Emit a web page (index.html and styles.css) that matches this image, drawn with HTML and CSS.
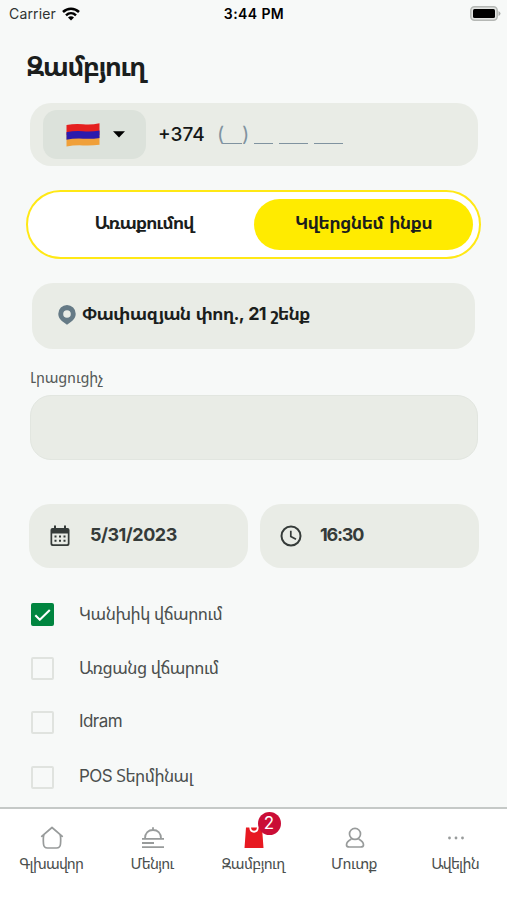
FILE: index.html
```html
<!DOCTYPE html>
<html lang="hy">
<head>
<meta charset="utf-8">
<meta name="viewport" content="width=device-width, initial-scale=1">
<title>Զամբյուղ</title>
<link rel="stylesheet" href="styles.css">
</head>
<body>
<div class="app">
  <header class="status">
    <div class="carrier"><span>Carrier</span>
      <svg width="18" height="14" viewBox="0 0 18 14" fill="none" stroke="#000" stroke-width="2.5"><path d="M1 5C5.500 .6 12.500 .6 17 5M4 8.300c2.900-2.700 7.100-2.700 10 0"/><path d="M6 10.400c1.700-1.500 4.300-1.500 6 0l-3 3z" fill="#000" stroke="none"/></svg>
    </div>
    <div class="clock">3:44 PM</div>
    <svg class="battery" width="31" height="15" viewBox="0 0 31 15"><rect x=".8" y=".8" width="26.400" height="13.400" rx="3.700" fill="#e3e5e3" stroke="#b5b8b5" stroke-width="1.500"/><rect x="3" y="3" width="22" height="9" rx="1.500"/><path d="M28.500 5q2 1 2 2.500t-2 2.500z" fill="#aaadaa"/></svg>
  </header>

  <main class="content">
    <h1 class="title">Զամբյուղ</h1>

    <div class="field phone">
      <button class="country" aria-label="Հայաստան">
        <svg width="34" height="24" viewBox="0 0 34 24">
          <defs><clipPath id="wave"><path d="M.5 2Q9 .3 17 1.200T33.500 .300V21.800q-8 1-16.500.6T.5 23.500z"/></clipPath></defs>
          <g clip-path="url(#wave)"><path fill="#e5201f" d="M0 0h34v12H0z"/><path fill="#f0a03a" d="M0 12h34v12H0z"/><path fill="#2b1aad" d="M0 9.200Q9 7.500 17 8.200t17-.7v7.400q-8 1.200-17 .8T0 16.700z"/></g>
        </svg>
        <svg width="12" height="7" viewBox="0 0 12 7"><path d="M0 .3h12L6 6.500z"/></svg>
      </button>
      <span class="code">+374</span>
      <span class="mask"><i class="paren">(</i><i class="blank two"></i><i class="paren">)</i><i class="blank gap two"></i><i class="blank gap three"></i><i class="blank gap three"></i></span>
    </div>

    <div class="switch">
      <button class="option"><span class="t-delivery">Առաքումով</span></button>
      <button class="option selected"><span class="t-pickup">Կվերցնեմ ինքս</span></button>
    </div>

    <div class="field address">
      <svg width="18" height="20" viewBox="0 0 18 20"><path fill="#657a86" fill-rule="evenodd" d="M9 0a8.700 8.700 0 0 0-8.700 8.700c0 4 2.500 6.500 5.300 8.500L9 19.800l3.400-2.600c2.800-2 5.300-4.500 5.300-8.500A8.700 8.700 0 0 0 9 0zm0 5.200a3.800 3.800 0 1 1 0 7.600 3.800 3.800 0 0 1 0-7.600z"/></svg>
      <span class="t-address">Փափազյան փող., 21 շենք</span>
    </div>

    <label class="label" for="note"><span class="t-label">Լրացուցիչ</span></label>
    <textarea class="field note" id="note"></textarea>

    <div class="schedule">
      <div class="field slot">
        <svg width="20" height="22" viewBox="0 0 20 22"><path fill="#353b39" fill-rule="evenodd" d="M4 .5h2V3h8V.5h2V3h1.500Q19.500 3 19.500 5v14q0 2-2 2h-15q-2 0-2-2V5q0-2 2-2H4zM2.200 8.500v9.800q0 1 1 1h13.600q1 0 1-1V8.500z"/><path fill="#353b39" d="M4.500 10.500h2v2h-2zm4.500 0h2v2H9zm4.500 0h2v2h-2zm-9 4.300h2v2h-2zm4.500 0h2v2H9zm4.500 0h2v2h-2z"/></svg>
        <span class="t-date">5/31/2023</span>
      </div>
      <div class="field slot">
        <svg width="22" height="22" viewBox="0 0 22 22" fill="none" stroke="#353b39" stroke-width="2"><circle cx="11" cy="11" r="9.500"/><path d="M10.800 5.800v5.700l5.200 2.800" stroke-width="1.700"/></svg>
        <span class="t-time">16:30</span>
      </div>
    </div>

    <ul class="payments">
      <li><span class="box checked"><svg width="17" height="12" viewBox="0 0 16 12" fill="none" stroke="#fff" stroke-width="2.100"><path d="M.8 6.200l4.500 4.500L15.300 1"/></svg></span><span class="t-cash">Կանխիկ վճարում</span></li>
      <li><span class="box"></span><span class="t-online">Առցանց վճարում</span></li>
      <li><span class="box"></span><span class="t-idram">Idram</span></li>
      <li><span class="box"></span><span class="t-pos">POS Տերմինալ</span></li>
    </ul>
  </main>

  <nav class="tabs">
    <a class="tab"><svg width="24" height="24" viewBox="0 0 24 24" fill="none" stroke="#989b9b" stroke-width="1.700" stroke-linejoin="round" stroke-linecap="round"><path d="M1.700 10.300L12 1.500l10.300 8.800M4 8.700c-1 2-.8 5.300-.5 9.300.3 3.300 1.500 4 4 4h9c2.500 0 3.700-.7 4-4 .3-4 .5-7.300-.5-9.300"/></svg><span class="t-home">Գլխավոր</span></a>
    <a class="tab"><svg width="24" height="24" viewBox="0 0 24 24" fill="none" stroke="#989b9b" stroke-width="1.800"><path d="M4 12.500C4 7 7.500 4 12 4s8 3 8 8.500M12 1.200V4M1 12.800h22M1 17h12M1 21.200h22"/></svg><span class="t-menu">Մենյու</span></a>
    <a class="tab"><span class="bag"><svg width="24" height="24" viewBox="0 0 24 24"><path fill="#e71921" d="M4 1.500h3.300q.4 5.200 4.700 5.200t4.700-5.200H20L21.500 22h-19z"/><path d="M9 1.500h6q-.4 3.200-3 3.200T9 1.500z" fill="#e71921"/></svg><b class="badge">2</b></span><span class="t-basket">Զամբյուղ</span></a>
    <a class="tab"><svg width="24" height="24" viewBox="0 0 24 24" fill="none" stroke="#989b9b" stroke-width="1.700"><circle cx="12" cy="7.900" r="5.500"/><path d="M8.500 13C5.500 14.500 3.500 17 3.500 19q0 2 3 2h11q3 0 3-2c0-2-2-4.500-5-6"/></svg><span class="t-login">Մուտք</span></a>
    <a class="tab"><svg width="24" height="24" viewBox="0 0 24 24" fill="#989b9b"><circle cx="5.500" cy="12" r="1.400"/><circle cx="12" cy="12" r="1.400"/><circle cx="18.500" cy="12" r="1.400"/></svg><span class="t-more">Ավելին</span></a>
  </nav>
</div>
</body>
</html>
```
FILE: styles.css
```css
* { box-sizing: border-box; }
body { margin: 0; background: #f7f9f8; color: #1b1e1d; font-family: "Inter", "Noto Sans Armenian", "DejaVu Sans", sans-serif; }
button { border: 0; padding: 0; font: inherit; color: inherit; background: none; }
svg { display: block; flex: none; }
span { white-space: nowrap; }
.app { width: 507px; height: 900px; display: flex; flex-direction: column; overflow: hidden; }

.status { height: 27px; flex: none; display: grid; grid-template-columns: 1fr auto 1fr; align-items: center; padding: 0 6px 0 9px; color: #000; font-size: 14px; }
.carrier { display: flex; align-items: center; gap: 6px; color: #303332; letter-spacing: .15px; }
.clock { font-weight: 600; letter-spacing: .4px; margin-right: 2px; }
.battery { justify-self: end; }

.content { flex: 1; min-height: 0; padding: 0 26px; }
.title { margin: 22px 0 0; height: 54px; font-size: 27px; line-height: 36px; font-weight: 700; letter-spacing: -1.900px; white-space: nowrap; }
.field { display: flex; align-items: center; background: #e9ece6; border-radius: 21px; }

.phone { height: 63px; margin: 0 3px 0 4px; padding-left: 13px; }
.country { width: 103px; height: 49px; border-radius: 14px; background: #dce2db; display: flex; align-items: center; justify-content: center; gap: 13px; padding-left: 2px; }
.code { margin-left: 12px; width: 59px; font-size: 19px; font-weight: 500; color: #151817; }
.mask { display: flex; height: 23px; align-items: flex-end; color: #8093a0; font-size: 20px; }
.paren { font-style: normal; width: 6px; line-height: 23px; font-weight: 400; }
.blank { border-bottom: 1.500px solid #8093a0; margin-bottom: 2px; }
.two { width: 19px; }
.three { width: 29px; }
.gap { margin-left: 6px; }

.switch { height: 69px; margin: 24px 0 0 0; display: grid; grid-template-columns: 1fr 219px; padding: 7px 6px 7px; border: 2px solid #ffe815; border-radius: 35px; background: #fff; }
.option { border-radius: 26px; font-size: 18px; font-weight: 700; padding-bottom: 5px; }
.selected { background: #ffeb00; }

.address { height: 66px; margin: 24px 6px 0; padding: 0 0 4px 26px; gap: 6px; font-size: 18px; font-weight: 700; }
.address svg { position: relative; top: 1px; }
.label { display: block; margin: 19px 4px 0; height: 27px; line-height: 20px; font-size: 15px; color: #555958; }
.note { display: block; width: 448px; height: 65px; margin-left: 4px; border: 1px solid #e2e6e0; resize: none; outline: 0; }

.schedule { display: grid; grid-template-columns: 1fr 1fr; gap: 12px; margin: 44px 2px 0 3px; }
.slot { height: 64px; padding-left: 21px; gap: 20px; font-size: 18px; font-weight: 700; color: #353b39; }
.slot + .slot { gap: 18px; padding-left: 20px; }
.slot span { padding-bottom: 4px; }

.payments { list-style: none; margin: 35px 0 0; padding: 0 0 0 5px; display: grid; gap: 31.200px; }
.payments li { height: 23px; display: flex; align-items: center; gap: 25px; font-size: 17px; color: #4b4f4e; }
.payments li > span:last-child { padding-bottom: 3px; }
.box { width: 23px; height: 23px; border: 2px solid #e0e3df; border-radius: 2px; flex: none; display: grid; place-items: center; }
.checked { background: #00853f; border-color: #00853f; }

.tabs { flex: none; height: 93px; display: grid; grid-template-columns: repeat(5, 101px); justify-content: center; background: #fff; border-top: 2px solid #c5c9c7; padding-top: 17px; }
.tab { display: flex; flex-direction: column; align-items: center; gap: 4px; font-size: 15px; line-height: 20px; color: #4b4f4e; }
.bag { position: relative; }
.badge { position: absolute; left: 16px; top: -14px; width: 23px; height: 23px; border-radius: 50%; background: #ca0d36; color: #fff; text-align: center; font-size: 17px; line-height: 23px; font-weight: 400; }

.t-delivery { letter-spacing: -1.200px; }
.t-pickup { letter-spacing: -.7px; word-spacing: 2px; }
.t-address { letter-spacing: -.850px; word-spacing: 1.500px; padding-bottom: 3px; }
.t-label { letter-spacing: -.2px; }
.t-date { letter-spacing: -.5px; }
.t-time { letter-spacing: -1.200px; }
.t-cash { letter-spacing: -.5px; }
.t-online { letter-spacing: -.550px; }
.t-idram { letter-spacing: -.550px; }
.t-pos { letter-spacing: -.550px; }
.t-home { letter-spacing: -.8px; }
.t-menu { letter-spacing: -.8px; }
.t-basket { letter-spacing: -.7px; }
.t-login { letter-spacing: -.6px; }
.t-more { letter-spacing: -.850px; }
.tab > span:last-child { margin-right: 1px; }
```
